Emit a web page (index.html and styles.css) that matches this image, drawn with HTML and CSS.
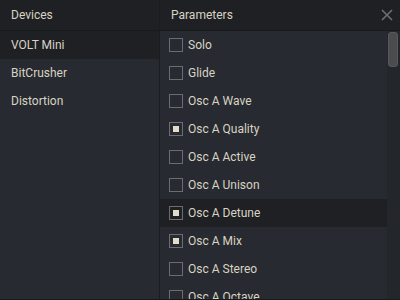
FILE: index.html
```html
<!DOCTYPE html>
<html lang="en">
<head>
    <meta charset="UTF-8">
    <title>Device Parameters</title>
    <link rel="stylesheet" href="styles.css">
</head>
<body>
    <div class="app">
        <!-- Devices -->
        <div class="devices">
            <div class="head">Devices</div>
            <ul class="device-list">
                <li class="selected">VOLT Mini</li>
                <li>BitCrusher</li>
                <li>Distortion</li>
            </ul>
        </div>

        <!-- Parameters -->
        <div class="params">
            <div class="head">
                <span>Parameters</span>
                <svg class="close" width="12" height="12" viewBox="0 0 12 12">
                    <path d="M1 1 L11 11 M11 1 L1 11" stroke="#6f6f6c" stroke-width="1.6" fill="none"/>
                </svg>
            </div>
            <div class="scroll">
                <ul class="param-list">
                    <li><span class="check"></span>Solo</li>
                    <li><span class="check"></span>Glide</li>
                    <li><span class="check"></span>Osc A Wave</li>
                    <li><span class="check on"></span>Osc A Quality</li>
                    <li><span class="check"></span>Osc A Active</li>
                    <li><span class="check"></span>Osc A Unison</li>
                    <li class="hover"><span class="check on"></span>Osc A Detune</li>
                    <li><span class="check on"></span>Osc A Mix</li>
                    <li><span class="check"></span>Osc A Stereo</li>
                    <li><span class="check"></span>Osc A Octave</li>
                    <li><span class="check"></span>Osc A Semi</li>
                </ul>
                <div class="scrollbar">
                    <div class="thumb"></div>
                </div>
            </div>
        </div>
    </div>
</body>
</html>
```

FILE: styles.css
```css
/* General */
body {
    margin: 0;
    padding: 0;
    background-color: #272a30;
    font-family: Roboto, "Liberation Sans", sans-serif;
    font-size: 12px;
    color: #d8d3c3;
}

ul {
    list-style: none;
    margin: 0;
    padding: 0;
}

.app {
    display: flex;
    height: 299px;
    border-bottom: 1px solid #18191b;
    overflow: hidden;
}

/* Headers */
.head {
    height: 30px;
    border-bottom: 1px solid #18191b;
    background-color: #1f2023;
    display: flex;
    align-items: center;
    justify-content: space-between;
}

/* Devices column */
.devices {
    width: 159px;
    border-right: 1px solid #1b1c1f;
    display: flex;
    flex-direction: column;
}

.devices .head {
    padding-left: 11px;
}

.device-list li {
    height: 28px;
    line-height: 28px;
    padding-left: 11px;
}

.device-list li.selected {
    background-color: #1f2023;
}

/* Parameters column */
.params {
    flex: 1;
    display: flex;
    flex-direction: column;
    min-width: 0;
}

.params .head {
    padding-left: 11px;
    padding-right: 7px;
}

.close {
    display: block;
}

.scroll {
    flex: 1;
    display: flex;
    min-height: 0;
}

.param-list {
    flex: 1;
    overflow: hidden;
}

.param-list li {
    height: 28px;
    display: flex;
    align-items: center;
    gap: 5px;
    padding-left: 9px;
}

.param-list li.hover {
    background-color: #1f2023;
}

.check {
    width: 12px;
    height: 12px;
    border: 1px solid #6c6d6e;
    display: flex;
    align-items: center;
    justify-content: center;
}

.check.on::after {
    content: "";
    width: 6px;
    height: 6px;
    background-color: #e2dcc8;
}

/* Scrollbar */
.scrollbar {
    width: 13px;
    background-color: #23262b;
    padding: 1px 2px 0 1px;
    box-sizing: border-box;
}

.thumb {
    height: 35px;
    border-radius: 3px;
    background-color: #4b4c4d;
    border: 1px solid #58595a;
    box-sizing: border-box;
}
```
